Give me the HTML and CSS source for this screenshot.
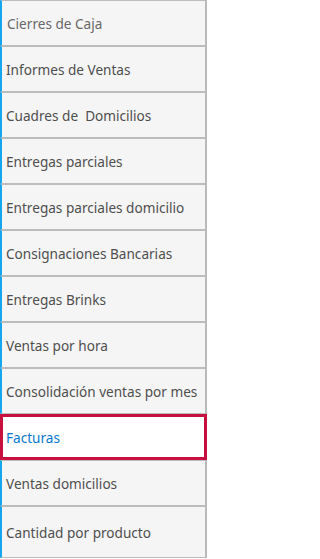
FILE: index.html
```html
<!DOCTYPE html>
<html lang="es">
<head>
<meta charset="utf-8">
<title>Menú</title>
<link rel="stylesheet" href="styles.css">
</head>
<body>
<ul class="menu">
  <li class="item item-first">Cierres de Caja</li>
  <li class="item">Informes de Ventas</li>
  <li class="item">Cuadres de&nbsp; Domicilios</li>
  <li class="item">Entregas parciales</li>
  <li class="item">Entregas parciales domicilio</li>
  <li class="item">Consignaciones Bancarias</li>
  <li class="item">Entregas Brinks</li>
  <li class="item">Ventas por hora</li>
  <li class="item">Consolidación ventas por mes</li>
  <li class="item item-active">Facturas</li>
  <li class="item">Ventas domicilios</li>
  <li class="item item-last">Cantidad por producto</li>
</ul>
</body>
</html>
```
FILE: styles.css
```css
html, body {
  margin: 0;
  padding: 0;
  background: #ffffff;
}
.menu {
  list-style: none;
  margin: 0;
  padding: 0;
  width: 207px;
  font-family: "Noto Sans", "Open Sans", sans-serif;
  font-size: 13.6px;
}
.item {
  box-sizing: border-box;
  height: 46px;
  display: flex;
  align-items: center;
  padding-left: 4px;
  background: #f5f5f5;
  color: #4f4f4f;
  border-top: 1px solid #bcbcbc;
  border-bottom: 1px solid #bcbcbc;
  border-left: 2px solid #14a6ef;
  border-right: 2px solid #b9b9b9;
  white-space: nowrap;
}
.item-first {
  color: #686868;
  padding-left: 5px;
}
.item-active {
  background: #ffffff;
  color: #0a78cf;
  border: 3px solid #c8103f;
  padding-left: 3px;
}
.item-last {
  height: 52px;
}
```
